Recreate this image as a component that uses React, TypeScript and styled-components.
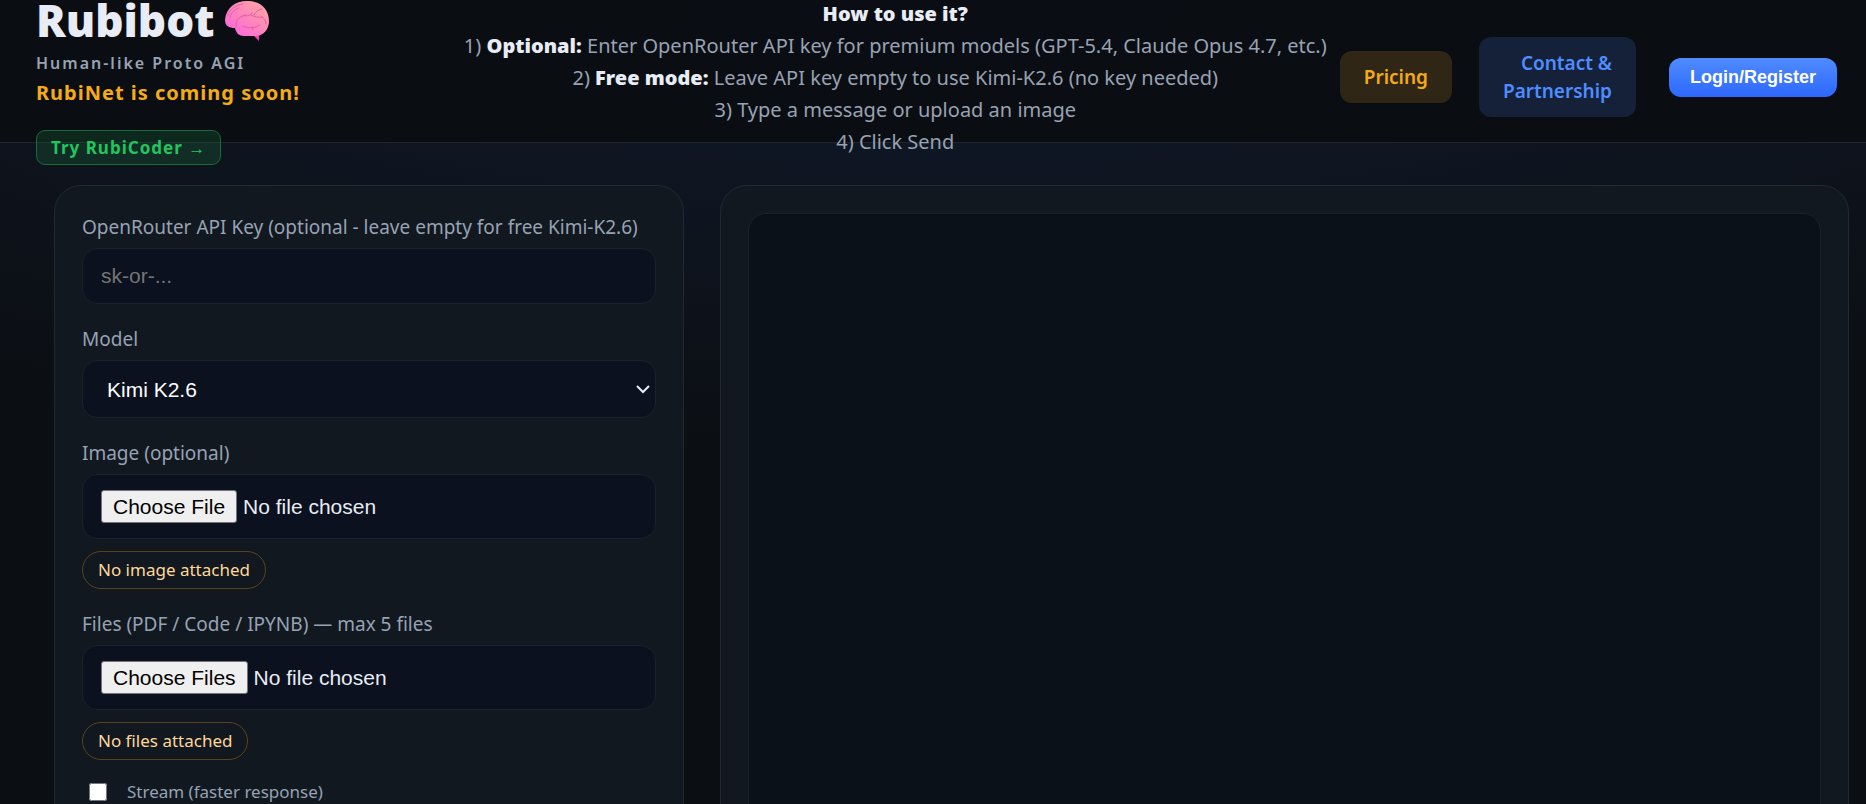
import React from "react";
import styled, { createGlobalStyle } from "styled-components";

const GlobalStyle = createGlobalStyle`
  * { box-sizing: border-box; }
  html { background: #0b0e12; }
  body {
    margin: 0;
    min-height: 100vh;
    overflow-x: hidden;
    color: #e8ecf4;
    font-family: "Segoe UI", "Noto Sans", "Open Sans", sans-serif;
    background: radial-gradient(1800px 480px at 50% 0, #111a2b 0%, #0b0e12 100%) no-repeat;
  }
`;

const Header = styled.header`
  height: 143px;
  padding: 0 29px 0 36px;
  display: flex;
  align-items: center;
  background: rgba(10, 13, 18, 0.9);
  border-bottom: 1px solid #20242b;
`;

const Brand = styled.div`
  align-self: flex-start;
  display: flex;
  flex-direction: column;
  align-items: flex-start;
  white-space: nowrap;
`;

const Title = styled.h1`
  margin: 0 0 12px;
  display: flex;
  align-items: center;
  gap: 10px;
  height: 39px;
  font-size: 44px;
  line-height: 38px;
  font-weight: 900;
`;

const Tagline = styled.span`
  font-size: 16px;
  line-height: 24px;
  font-weight: 600;
  letter-spacing: 2px;
  color: #98a2b3;
`;

const Notice = styled.strong`
  margin-top: 4px;
  font-size: 20px;
  line-height: 28px;
  font-weight: 700;
  letter-spacing: 1px;
  color: #f5ab16;
`;

const CoderLink = styled.a`
  margin-top: 23px;
  padding: 0 14px;
  border: 1px solid #176b39;
  border-radius: 9px;
  background: rgba(34, 197, 94, 0.14);
  color: #22c55e;
  font-size: 17px;
  line-height: 33px;
  font-weight: 700;
  letter-spacing: 1px;
  text-decoration: none;
`;

const Help = styled.div`
  margin: 14px 13px 0 auto;
  color: #98a2b3;
  font-size: 20px;
  line-height: 32px;
  text-align: center;
  white-space: nowrap;

  p { margin: 0; }
  strong { color: #e8ecf4; font-weight: 900; }
`;

const Actions = styled.nav`
  margin-top: 12px;
  display: flex;
  align-items: center;
  gap: 27px;
`;

const NavLink = styled.a<{ $tone: "amber" | "blue" }>`
  padding: 12px 24px;
  border-radius: 12px;
  font-size: 19px;
  line-height: 28px;
  font-weight: 600;
  text-align: right;
  text-decoration: none;
  color: ${(p) => (p.$tone === "amber" ? "#f5ab16" : "#4f8cff")};
  background: ${(p) => (p.$tone === "amber" ? "#2f2615" : "#142138")};
`;

const LoginButton = styled.button`
  height: 39px;
  margin-left: 6px;
  padding: 0 21px;
  border: 0;
  border-radius: 12px;
  background: linear-gradient(#4f8cff, #2d67ff);
  color: #fff;
  font: bold 18px "Liberation Sans", Arial, sans-serif;
`;

const Main = styled.main`
  display: grid;
  grid-template-columns: minmax(0, 630fr) minmax(0, 1129fr);
  gap: 36px;
  padding: 42px 17px 42px 54px;
`;

const Panel = styled.section`
  padding: 27px;
  border: 1px solid #242830;
  border-radius: 27px;
  background: #111820;
`;

const Label = styled.label`
  display: block;
  margin-bottom: 7px;
  font-size: 19px;
  line-height: 28px;
  color: #98a2b3;
`;

const Field = styled.div`
  margin-bottom: 21px;
`;

const control = `
  display: block;
  width: 100%;
  border: 1px solid #1c222d;
  border-radius: 15px;
  background: #0b111e;
  color: #e8ecf4;
  font: 21px "Liberation Sans", Arial, sans-serif;
`;

const TextInput = styled.input`
  ${control}
  height: 56px;
  padding: 0 18px;
  &::placeholder { color: #757575; }
`;

const SelectBox = styled.div`
  position: relative;

  svg {
    position: absolute;
    right: 6px;
    top: 50%;
    margin-top: -4px;
    pointer-events: none;
  }
`;

const Select = styled.select`
  ${control}
  height: 58px;
  padding: 0 24px;
  color: #fff;
  appearance: none;
`;

const FileInput = styled.input`
  ${control}
  padding: 15px 18px;
  height: 65px;

  &::file-selector-button {
    height: 33px;
    margin-right: 6px;
    padding: 0 11px;
    border: 1px solid #767676;
    border-radius: 3px;
    background: #efefef;
    color: #000;
    font: inherit;
  }
`;

const Badge = styled.div`
  width: fit-content;
  margin-top: 12px;
  padding: 0 15px;
  border: 1px solid #5d431b;
  border-radius: 19px;
  color: #ffd79a;
  font-size: 17px;
  line-height: 36px;
`;

const CheckRow = styled.label`
  display: flex;
  align-items: center;
  gap: 20px;
  color: #98a2b3;
  font-size: 17px;
  line-height: 22px;

  input { width: 18px; height: 18px; margin: 0 0 0 7px; }
`;

const Chat = styled.div`
  min-height: 750px;
  border: 1px solid #1c222b;
  border-radius: 18px;
  background: #0a1119;
`;

const Brain = () => (
  <svg width="46" height="42" viewBox="0 0 46 42" aria-hidden="true">
    <defs>
      <linearGradient id="lobe" x1="1" y1="0" x2="0" y2="1">
        <stop offset="0" stopColor="#ffaa9c" />
        <stop offset="0.5" stopColor="#ff85bd" />
        <stop offset="1" stopColor="#ff5fe6" />
      </linearGradient>
    </defs>
    <path d="M28 35l7 7v-8z" fill="#ff3fc0" />
    <path d="M1 21C2 9 11 2 23 2c13 0 22 8 22 20 0 8-5 14-12 15H20c-5 0-8-3-9-8C5 29 1 27 1 21z" fill="url(#lobe)" />
    <g fill="none" stroke="#e05fa6" strokeWidth="1" strokeLinecap="round">
      <path d="M4 16C6 10 11 6 19 5M6 18c2-5 5-8 9-9M12 28c-1-7 4-11 10-12M21 17c4 0 6-1 7-3M27 16c4 2 7 3 11 2M38 10c-4 1-7 3-8 6M19 27c6 3 12 2 17-1M28 28l1 3M38 18c3 2 4 5 4 7" />
    </g>
  </svg>
);

const Chevron = () => (
  <svg width="14" height="9" viewBox="0 0 14 9" aria-hidden="true">
    <path d="M1 1l6 6 6-6" fill="none" stroke="#e8ecf4" strokeWidth="2" />
  </svg>
);

export default function App() {
  return (
    <>
      <GlobalStyle />
      <Header>
        <Brand>
          <Title>Rubibot <Brain /></Title>
          <Tagline>Human-like Proto AGI</Tagline>
          <Notice>RubiNet is coming soon!</Notice>
          <CoderLink href="#coder">Try RubiCoder →</CoderLink>
        </Brand>
        <Help>
          <p><strong>How to use it?</strong></p>
          <p>1) <strong>Optional:</strong> Enter OpenRouter API key for premium models (GPT-5.4, Claude Opus 4.7, etc.)</p>
          <p>2) <strong>Free mode:</strong> Leave API key empty to use Kimi-K2.6 (no key needed)</p>
          <p>3) Type a message or upload an image</p>
          <p>4) Click Send</p>
        </Help>
        <Actions>
          <NavLink $tone="amber" href="#pricing">Pricing</NavLink>
          <NavLink $tone="blue" href="#contact">Contact &amp;<br />Partnership</NavLink>
          <LoginButton type="button">Login/Register</LoginButton>
        </Actions>
      </Header>
      <Main>
        <Panel>
          <Field>
            <Label htmlFor="key">OpenRouter API Key (optional - leave empty for free Kimi-K2.6)</Label>
            <TextInput id="key" placeholder="sk-or-..." />
          </Field>
          <Field>
            <Label htmlFor="model">Model</Label>
            <SelectBox>
              <Select id="model"><option>Kimi K2.6</option></Select>
              <Chevron />
            </SelectBox>
          </Field>
          <Field>
            <Label htmlFor="image">Image (optional)</Label>
            <FileInput id="image" type="file" accept="image/*" />
            <Badge>No image attached</Badge>
          </Field>
          <Field>
            <Label htmlFor="files">Files (PDF / Code / IPYNB) — max 5 files</Label>
            <FileInput id="files" type="file" multiple />
            <Badge>No files attached</Badge>
          </Field>
          <CheckRow><input type="checkbox" />Stream (faster response)</CheckRow>
        </Panel>
        <Panel><Chat /></Panel>
      </Main>
    </>
  );
}
